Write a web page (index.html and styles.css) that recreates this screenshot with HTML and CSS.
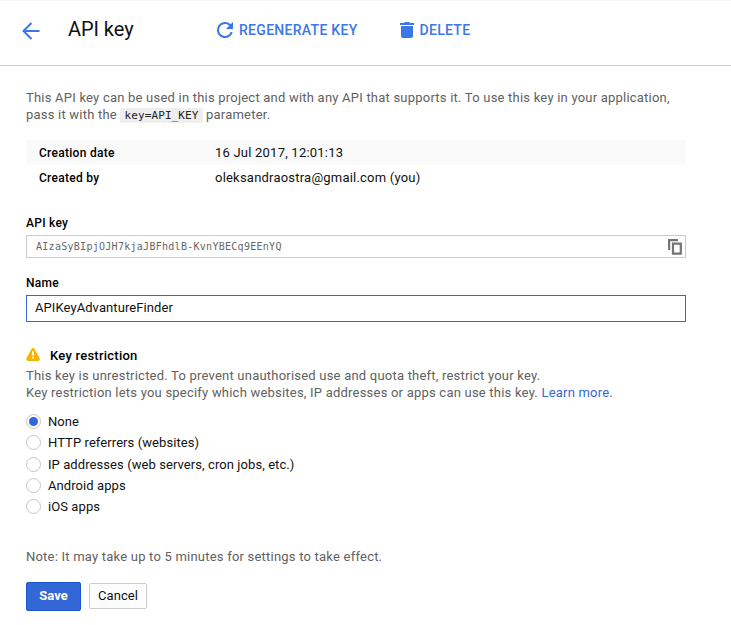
FILE: index.html
```html
<!DOCTYPE html>
<html lang="en">
<head>
<meta charset="utf-8">
<title>API key</title>
<link rel="stylesheet" href="styles.css">
</head>
<body>
<header class="toolbar">
  <svg class="back" viewBox="0 0 18 18"><path d="M17.5 9H1.5M9.5 1 1.5 9l8 8"/></svg>
  <h1 class="title">API key</h1>
  <a class="action regenerate"><svg class="refresh" viewBox="4 4 16 16"><path d="M17.65 6.35A7.96 7.96 0 0 0 12 4a8 8 0 1 0 7.73 10h-2.08A6 6 0 1 1 12 6c1.66 0 3.14.69 4.22 1.78L13 11h7V4z"/></svg><span>REGENERATE KEY</span></a>
  <a class="action delete"><svg class="trash" viewBox="0 0 14 16"><path d="M0 1h4l1-1h4l1 1h4v2H0zM1 4h12v10a2 2 0 0 1-2 2H3a2 2 0 0 1-2-2z"/></svg><span>DELETE</span></a>
</header>
<main class="content">
  <p class="intro">This API key can be used in this project and with any API that supports it. To use this key in your application,<br>pass it with the <code>key=API_KEY</code> parameter.</p>
  <dl class="details">
    <div class="row shaded"><dt>Creation date</dt><dd>16 Jul 2017, 12:01:13</dd></div>
    <div class="row"><dt>Created by</dt><dd>oleksandraostra@gmail.com (you)</dd></div>
  </dl>
  <div class="label">API key</div>
  <div class="key-box"><span>AIzaSyBIpjOJH7kjaJBFhdlB-KvnYBECq9EEnYQ</span><svg class="copy" viewBox="0 0 14 16"><path class="copy-back" d="M1.1 11V1.1H10"/><path class="copy-front" d="M5 4.7h7.8v10H5z"/></svg></div>
  <div class="label name-label">Name</div>
  <div class="name-box">APIKeyAdvantureFinder</div>
  <h2 class="restriction"><svg class="warning" viewBox="0 0 14 13"><path class="sign" d="M7 1.9 12 11.1H2z"/><path class="mark" d="M7 3.2v4.3M7 8.8v1.8"/></svg>Key restriction</h2>
  <p class="help">This key is unrestricted. To prevent unauthorised use and quota theft, restrict your key.<br>Key restriction lets you specify which websites, IP addresses or apps can use this key. <a class="link">Learn more</a>.</p>
  <div class="options">
    <label class="option"><span class="radio checked"></span>None</label>
    <label class="option"><span class="radio"></span>HTTP referrers (websites)</label>
    <label class="option"><span class="radio"></span>IP addresses (web servers, cron jobs, etc.)</label>
    <label class="option"><span class="radio"></span>Android apps</label>
    <label class="option"><span class="radio"></span>iOS apps</label>
  </div>
  <p class="note">Note: It may take up to 5 minutes for settings to take effect.</p>
  <div class="buttons"><button class="save">Save</button><button class="cancel">Cancel</button></div>
</main>
</body>
</html>
```
FILE: styles.css
```css
* { box-sizing: border-box; }
body {
  margin: 0;
  height: 625px;
  overflow: hidden;
  background: #fff;
  color: #111;
  font: 13px/17px Roboto, sans-serif;
  letter-spacing: 0.215px;
}
h1, h2, p, dl, dd { margin: 0; }
svg { display: block; flex: none; }
.toolbar {
  display: flex;
  align-items: center;
  height: 66px;
  padding: 0 0 6px 22px;
  border-top: 1px solid #f5f5f5;
  border-bottom: 1px solid #ccc;
}
.back {
  width: 18px;
  height: 18px;
  margin-top: 1px;
  fill: none;
  stroke: #3b78e7;
  stroke-width: 2;
}
.title {
  width: 149px;
  margin: 0 0 2px 28px;
  font-size: 20px;
  line-height: 26px;
  font-weight: 400;
  letter-spacing: -0.05px;
}
.action {
  display: flex;
  align-items: center;
  color: #3b78e7;
  font-size: 14px;
  font-weight: 500;
  letter-spacing: 0.29px;
}
.action svg { fill: #3b78e7; }
.refresh { width: 16px; height: 16px; margin-right: 6px; }
.trash { width: 14px; height: 16px; margin-right: 6px; }
.delete { margin-left: 42px; }
.content { width: 686px; padding: 23px 0 0 26px; }
.intro, .help, .note { color: #616161; white-space: nowrap; }
.intro code {
  padding: 1px 4px;
  border-radius: 2px;
  background: #eee;
  color: #222;
  font: 11px/13px "DejaVu Sans Mono", monospace;
  letter-spacing: 0.12px;
}
.details { margin-top: 17px; }
.row { display: flex; align-items: center; height: 25px; padding-left: 13px; }
.shaded { background: #fafafa; }
.row dt {
  width: 176px;
  padding-top: 1px;
  font-size: 12px;
  font-weight: 500;
  color: #000;
  letter-spacing: 0.28px;
}
.row dt, .label { line-height: 18px; }
.label {
  margin-top: 24px;
  font-size: 12px;
  font-weight: 500;
  color: #000;
  letter-spacing: 0.26px;
}
.key-box {
  display: flex;
  align-items: center;
  justify-content: space-between;
  height: 23px;
  margin-top: 3px;
  padding: 0 3px 0 9px;
  border: 1px solid #ccc;
  color: #666;
  font: 10px/20px "DejaVu Sans Mono", monospace;
  letter-spacing: 0.28px;
}
.copy { width: 14px; height: 16px; fill: none; stroke: #757575; stroke-width: 2.2; }
.label.name-label { margin-top: 16px; }
.name-box {
  height: 27px;
  margin-top: 3px;
  padding: 0 8px;
  border: 1px solid #3367d6;
  line-height: 24px;
  letter-spacing: 0.08px;
}
.restriction {
  display: flex;
  align-items: center;
  margin-top: 25px;
  font-size: 13px;
  font-weight: 500;
  color: #000;
  letter-spacing: 0.24px;
}
.warning { width: 14px; height: 13px; margin: -2px 10.5px 0 -0.5px; }
.sign { fill: #f4b400; stroke: #f4b400; stroke-width: 3.6; stroke-linejoin: round; }
.mark { fill: none; stroke: #fff; stroke-width: 1.7; }
.help { margin-top: 3px; }
.link { color: #3367d6; }
.options { margin-top: 10px; }
.option { display: flex; align-items: center; height: 21.25px; letter-spacing: 0.08px; }
.radio {
  display: grid;
  place-items: center;
  width: 15px;
  height: 15px;
  margin-right: 7px;
  border: 1px solid #c6c6c6;
  border-radius: 50%;
}
.checked::after {
  content: "";
  width: 9px;
  height: 9px;
  border-radius: 50%;
  background: #3367d6;
}
.note { margin-top: 31px; }
.buttons { display: flex; align-items: flex-start; gap: 8px; margin-top: 17px; }
.buttons button { padding: 0; border-radius: 2px; font: 13px/17px Roboto, sans-serif; }
.buttons .save {
  width: 55px;
  height: 29px;
  border: 1px solid #1a56cb;
  background: #3367d6;
  color: #fff;
  font-weight: 700;
  padding-bottom: 2px;
}
.buttons .cancel {
  width: 58px;
  height: 26px;
  margin-top: 1px;
  padding-bottom: 2px;
  border: 1px solid #ccc;
  background: #fdfdfd;
  color: #111;
  letter-spacing: 0.1px;
}
```
